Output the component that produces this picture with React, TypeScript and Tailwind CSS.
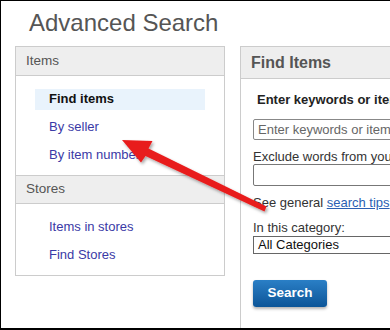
import React from "react";

const leftGroups = [
  { title: "Items", links: ["Find items", "By seller", "By item number"], active: "Find items" },
  { title: "Stores", links: ["Items in stores", "Find Stores"], active: "" },
];

const App = () => {
  return (
    <div
      className="relative w-[390px] h-[330px] overflow-hidden bg-white border-l border-t border-b-2 border-black text-[#333]"
      style={{ fontFamily: '"Liberation Sans", Arial, sans-serif' }}
    >
      {/* Title */}
      <h1 className="pl-[28px] pt-[8px] text-[24px] leading-[28px] text-[#555] font-normal">Advanced Search</h1>

      <div className="flex items-start gap-[15px] ml-[14px] mt-[9px]">
        {/* Left nav */}
        <div className="w-[210px] shrink-0 border border-[#ccc]">
          {leftGroups.map((g, gi) => (
            <div key={g.title}>
              <div
                className={`h-[29px] flex items-center pl-[10px] bg-[#eee] border-b border-[#ccc] text-[13.5px] text-[#555] ${gi > 0 ? "border-t" : ""}`}
              >
                {g.title}
              </div>
              <ul className="px-[19px] pt-[9px] pb-[6px]">
                {g.links.map((l) => (
                  <li key={l} className="h-[28px] flex items-center">
                    {l === g.active ? (
                      <span className="w-full h-[21px] flex items-center pl-[14px] bg-[#e9f3fc] font-bold text-[13px] text-[#111]">
                        {l}
                      </span>
                    ) : (
                      <a className="pl-[14px] text-[13px] text-[#3a3aa6] whitespace-nowrap">{l}</a>
                    )}
                  </li>
                ))}
              </ul>
            </div>
          ))}
        </div>

        {/* Right panel */}
        <div className="w-[220px] shrink-0 h-[290px] border-l border-t border-[#ccc]">
          <div className="h-[32px] flex items-center pl-[10px] bg-[#eee] border-b border-[#ccc] text-[16px] font-bold text-[#555]">
            Find Items
          </div>
          <div className="pl-[12px] pt-[13px] text-[13px] whitespace-nowrap">
            <div className="pl-[4px] font-bold text-[#222] leading-[16px]">Enter keywords or item number</div>
            <div className="mt-[11px] h-[21px] flex items-center border border-[#888] rounded-[2px] pl-[4px] text-[13px] text-[#666]">
              Enter keywords or item number
            </div>
            <div className="mt-[9px] leading-[16px] text-[#333]">Exclude words from your search</div>
            <div className="mt-[-1px] h-[22px] border border-[#777] rounded-[2px]" />
            <div className="mt-[9px] leading-[16px] text-[#333]">
              See general <a className="text-[#2b5fb3] underline">search tips</a>
            </div>
            <div className="mt-[9px] leading-[16px] text-[#333]">In this category:</div>
            <div className="h-[18px] flex items-center border border-[#666] pl-[4px] text-[13px] text-[#111]">
              All Categories
            </div>
            <button className="mt-[26px] w-[74px] h-[27px] rounded-[3px] bg-gradient-to-b from-[#2a7fc6] to-[#0b5598] text-white font-bold text-[13.5px] shadow-[0_2px_3px_rgba(0,0,0,0.3)]">
              Search
            </button>
          </div>
        </div>
      </div>

      {/* Annotation arrow */}
      <svg className="absolute left-0 top-0 pointer-events-none" width="390" height="330" viewBox="-1 0 390 330">
        <defs>
          <filter id="sh" x="-20%" y="-20%" width="140%" height="140%">
            <feDropShadow dx="1.5" dy="2" stdDeviation="1.5" floodColor="#000" floodOpacity="0.35" />
          </filter>
        </defs>
        <polygon
          filter="url(#sh)"
          fill="#e81d1d"
          points="120,139 150.5,140 146.5,147.5 264.5,205.5 262.5,210.5 143.5,155 139,161.5"
        />
      </svg>
    </div>
  );
};

export default App;
